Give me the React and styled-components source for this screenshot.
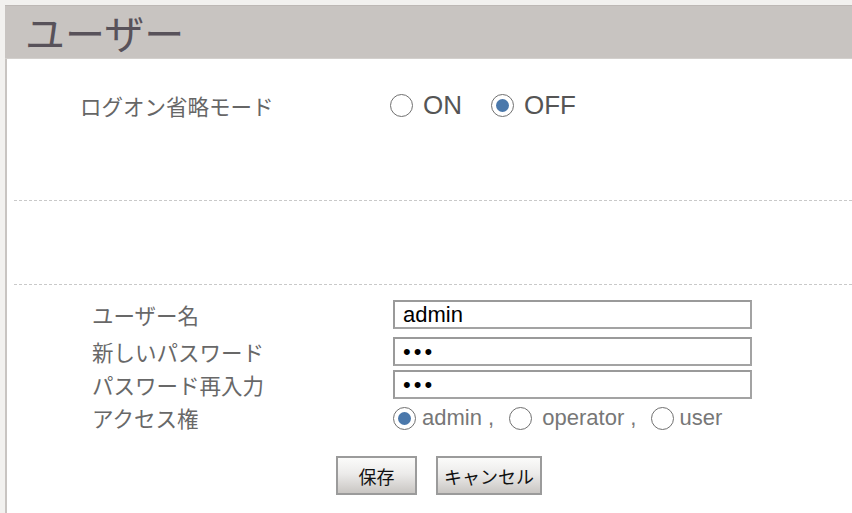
import React from "react";
import styled, { createGlobalStyle } from "styled-components";

const Global = createGlobalStyle`
  html, body { margin: 0; padding: 0; }
  body {
    background: #f2f1ef;
    font-family: "Liberation Sans", "Noto Sans CJK JP", sans-serif;
  }
`;

const Page = styled.div`
  margin: 5px 0 0 5px;
  min-height: 508px;
  background: #ffffff;
  border-left: 2px solid #c8c4c1;
  box-sizing: border-box;
`;

const Header = styled.div`
  height: 54px;
  margin-left: -2px;
  background: #c8c4c1;
  border-top: 1px solid #bdb8b5;
  border-bottom: 1px solid #d3d0cd;
  box-sizing: border-box;
  display: flex;
  align-items: center;
  padding-left: 20px;
`;

const Title = styled.h1`
  margin: 0;
  font-family: "Noto Sans CJK JP", sans-serif;
  font-weight: 400;
  font-size: 40px;
  line-height: 1;
  color: #58525a;
`;

const TopSection = styled.section`
  height: 141px;
  box-sizing: border-box;
  padding: 31px 0 0 73px;
`;

const ModeRow = styled.div`
  display: flex;
  align-items: center;
  height: 30px;
`;

const ModeLabel = styled.span`
  width: 310px;
  font-family: "Noto Sans CJK JP", sans-serif;
  font-size: 21.5px;
  color: #666666;
`;

const Options = styled.div`
  display: flex;
  align-items: center;
`;

const Option = styled.label`
  display: flex;
  align-items: center;
  gap: ${(p) => p.$gap ?? 10}px;
  margin-right: ${(p) => p.$mr ?? 0}px;
  font-family: "Liberation Sans", sans-serif;
  font-size: ${(p) => p.$size ?? 26}px;
  color: ${(p) => p.$color ?? "#555555"};
  line-height: 1;
  white-space: pre;
`;

const RadioDot = styled.span`
  width: 23px;
  height: 23px;
  box-sizing: border-box;
  border-radius: 50%;
  border: 1px solid #707070;
  background: #ffffff;
  display: flex;
  align-items: center;
  justify-content: center;
  flex: none;
  &::after {
    content: "";
    display: ${(p) => (p.$checked ? "block" : "none")};
    width: 13px;
    height: 13px;
    border-radius: 50%;
    background: #4a78ab;
  }
`;

const Divider = styled.div`
  margin-left: 7px;
  height: 1px;
  background: repeating-linear-gradient(
    to right,
    #c9c9c9 0 3px,
    transparent 3px 5px
  );
`;

const EmptySection = styled.section`
  height: 83px;
`;

const FormSection = styled.section`
  padding: 15px 0 0 85px;
`;

const FieldRow = styled.div`
  display: grid;
  grid-template-columns: 301px 359px;
  align-items: center;
  height: ${(p) => p.$h ?? 29}px;
  margin-bottom: ${(p) => p.$mb ?? 4}px;
`;

const FieldLabel = styled.span`
  font-family: "Noto Sans CJK JP", sans-serif;
  font-size: 21.5px;
  color: #686868;
  line-height: 1;
`;

const TextInput = styled.input`
  width: 359px;
  height: 29px;
  box-sizing: border-box;
  border: 2px solid #a3a3a3;
  border-top-color: #9a9a9a;
  border-left-color: #9a9a9a;
  padding: 0 8px;
  font-family: "Liberation Sans", sans-serif;
  font-size: 22px;
  letter-spacing: ${(p) => (p.type === "password" ? "3px" : "0")};
  color: #000000;
  background: #ffffff;
  outline: none;
`;

const Buttons = styled.div`
  display: flex;
  gap: 19px;
  margin: 23px 0 0 244px;
`;

const Button = styled.button`
  height: 39px;
  min-width: 81px;
  padding: 0 6px;
  box-sizing: border-box;
  border: 2px solid #9b9b9b;
  background: linear-gradient(to bottom, #fbfbfa 0%, #ecebea 45%, #c9c6c3 100%);
  font-family: "Noto Sans CJK JP", sans-serif;
  font-size: 18px;
  color: #111111;
  cursor: pointer;
`;

export default function App() {
  return (
    <>
      <Global />
      <Page>
        <Header>
          <Title>ユーザー</Title>
        </Header>
        <TopSection>
          <ModeRow>
            <ModeLabel>ログオン省略モード</ModeLabel>
            <Options>
              <Option $mr={29}>
                <RadioDot />
                ON
              </Option>
              <Option>
                <RadioDot $checked />
                OFF
              </Option>
            </Options>
          </ModeRow>
        </TopSection>
        <Divider />
        <EmptySection />
        <Divider />
        <FormSection>
          <FieldRow $mb={8}>
            <FieldLabel>ユーザー名</FieldLabel>
            <TextInput type="text" defaultValue="admin" readOnly />
          </FieldRow>
          <FieldRow>
            <FieldLabel>新しいパスワード</FieldLabel>
            <TextInput type="password" defaultValue="abc" readOnly />
          </FieldRow>
          <FieldRow>
            <FieldLabel>パスワード再入力</FieldLabel>
            <TextInput type="password" defaultValue="abc" readOnly />
          </FieldRow>
          <FieldRow $h={30} $mb={0}>
            <FieldLabel>アクセス権</FieldLabel>
            <Options>
              <Option $gap={6} $mr={15} $size={22} $color="#777777">
                <RadioDot $checked />
                admin ,
              </Option>
              <Option $gap={4} $mr={15} $size={22} $color="#777777">
                <RadioDot />
                {" operator ,"}
              </Option>
              <Option $gap={5} $size={22} $color="#777777">
                <RadioDot />
                user
              </Option>
            </Options>
          </FieldRow>
          <Buttons>
            <Button type="button">保存</Button>
            <Button type="button">キャンセル</Button>
          </Buttons>
        </FormSection>
      </Page>
    </>
  );
}
